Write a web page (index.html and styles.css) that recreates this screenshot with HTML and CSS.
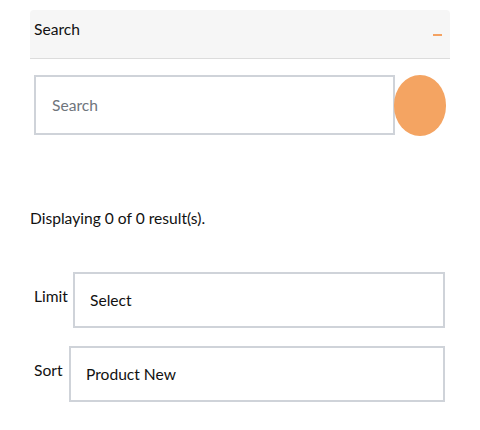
FILE: index.html
```html
<!DOCTYPE html>
<html>
<head>
<meta charset="utf-8">
<link rel="stylesheet" href="styles.css">
</head>
<body>
<div class="page">
  <div class="panel">
    <div class="panel-head">
      <span class="panel-title">Search</span>
      <span class="dash"></span>
    </div>
    <div class="search-row">
      <div class="search-input">Search</div>
      <div class="search-btn"></div>
    </div>
  </div>
  <p class="results">Displaying 0 of 0 result(s).</p>
  <div class="field limit">
    <span class="label">Limit</span>
    <div class="box">Select</div>
  </div>
  <div class="field sort">
    <span class="label">Sort</span>
    <div class="box">Product New</div>
  </div>
</div>
</body>
</html>
```
FILE: styles.css
```css
* { box-sizing: border-box; }
html, body { margin: 0; padding: 0; background: #fff; }
body {
  font-family: "Lato", "Liberation Sans", sans-serif;
  font-size: 15.6px;
  color: #111;
}
.page {
  width: 420px;
  margin-left: 30px;
  padding-top: 10px;
}
.panel-head {
  height: 49px;
  background: #f6f6f6;
  border-bottom: 1px solid #dcdcdc;
  border-radius: 4px 4px 0 0;
  display: flex;
  justify-content: space-between;
  align-items: flex-start;
  padding: 10px 8px 0 4px;
}
.panel-title { line-height: 19px; }
.dash {
  width: 9px;
  height: 2px;
  background: #f4a262;
  margin-top: 14px;
}
.search-row {
  display: flex;
  align-items: flex-start;
  margin-top: 16px;
  padding-left: 4px;
}
.search-input {
  width: 361px;
  height: 60px;
  border: 2px solid #cfd3d9;
  display: flex;
  align-items: center;
  padding-left: 16px;
  color: #6f757c;
}
.search-btn {
  width: 52px;
  height: 61px;
  margin-left: -1px;
  background: #f4a462;
  border-radius: 26px / 30px;
}
.results {
  margin: 0;
  margin-top: 73px;
  line-height: 19px;
}
.field {
  display: flex;
  align-items: flex-start;
  padding-left: 4px;
}
.limit { margin-top: 44px; }
.sort { margin-top: 18px; }
.label {
  line-height: 19px;
  margin-top: 15px;
}
.limit .label { width: 39px; }
.sort .label { width: 35px; }
.box {
  flex: 1;
  height: 56px;
  margin-right: 5px;
  border: 2px solid #cfd3d9;
  display: flex;
  align-items: center;
  padding-left: 15px;
  color: #111;
}
```
